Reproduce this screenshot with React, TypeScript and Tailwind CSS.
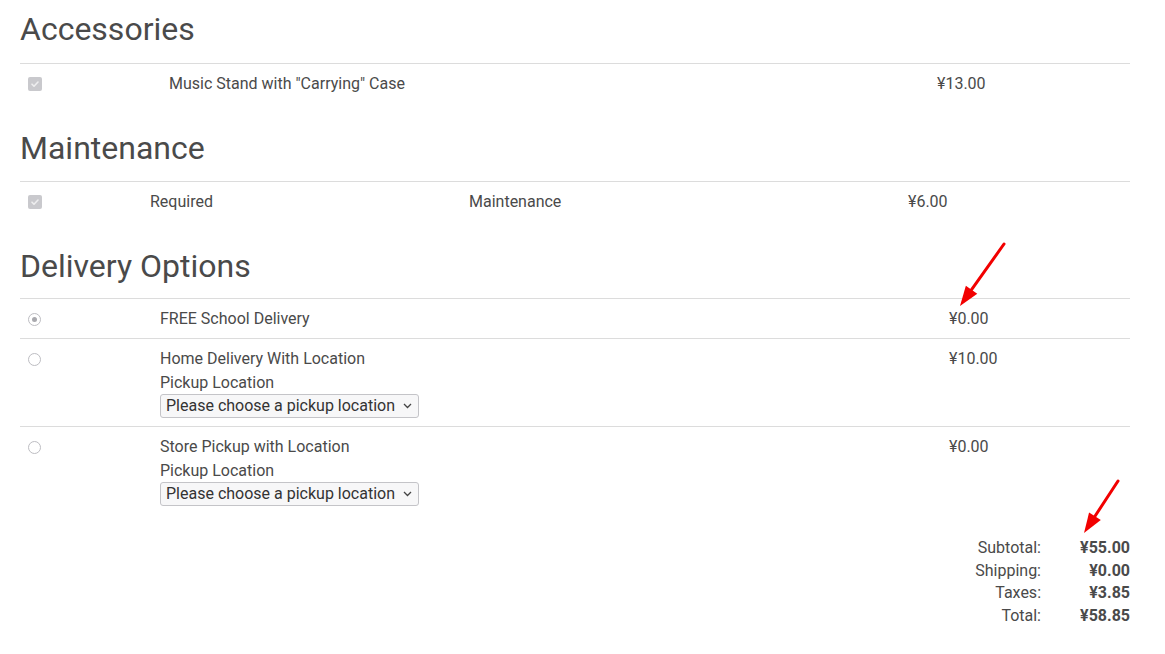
const font = { fontFamily: "Roboto, 'Noto Sans', sans-serif" };

function Check() {
  return (
    <span className="flex h-[14px] w-[14px] items-center justify-center rounded-[2px] bg-[#c9c9cd]">
      <svg width="10" height="10" viewBox="0 0 10 10" fill="none">
        <path d="M2 5.2l2 2 4-4.2" stroke="#eeeeef" strokeWidth="1.6" strokeLinecap="round" strokeLinejoin="round" />
      </svg>
    </span>
  );
}

function Radio({ checked }: { checked?: boolean }) {
  return (
    <span className="flex h-[13px] w-[13px] items-center justify-center rounded-full border border-[#bdbdc2] bg-white">
      {checked && <span className="h-[5px] w-[5px] rounded-full bg-[#a9a9ae]" />}
    </span>
  );
}

function PickupSelect() {
  return (
    <div className="flex h-[24px] w-[259px] items-center justify-between rounded-[3px] border border-[#c4c4c8] bg-[#f7f7f8] pl-[5px] pr-[6px] text-[#333]">
      <span>Please choose a pickup location</span>
      <svg width="9" height="6" viewBox="0 0 9 6" fill="none">
        <path d="M1 1l3.5 3.5L8 1" stroke="#444" strokeWidth="1.3" />
      </svg>
    </div>
  );
}

const deliveries = [
  { name: "FREE School Delivery", price: "¥0.00", checked: true, pickup: false },
  { name: "Home Delivery With Location", price: "¥10.00", checked: false, pickup: true },
  { name: "Store Pickup with Location", price: "¥0.00", checked: false, pickup: true },
];

const totals = [
  ["Subtotal:", "¥55.00"],
  ["Shipping:", "¥0.00"],
  ["Taxes:", "¥3.85"],
  ["Total:", "¥58.85"],
];

function Arrow({ x1, y1, x2, y2 }: { x1: number; y1: number; x2: number; y2: number }) {
  const ang = Math.atan2(y2 - y1, x2 - x1);
  const len = 20;
  const w = 7;
  const bx = x2 - len * Math.cos(ang);
  const by = y2 - len * Math.sin(ang);
  const px = -Math.sin(ang) * w;
  const py = Math.cos(ang) * w;
  return (
    <g>
      <line x1={x1} y1={y1} x2={bx} y2={by} stroke="#f20000" strokeWidth="3" strokeLinecap="round" />
      <polygon points={`${x2},${y2} ${bx + px},${by + py} ${bx - px},${by - py}`} fill="#f20000" />
    </g>
  );
}

export default function App() {
  return (
    <div className="relative h-[654px] w-[1165px] overflow-hidden bg-white text-[16px] leading-[24px] text-[#4a4a4a]" style={font}>
      <div className="ml-5 flex w-[1110px] flex-col">
        <h2 className="mb-[15px] pt-[10px] text-[32px] leading-[38px]">Accessories</h2>
        <div className="grid h-[40px] grid-cols-[149px_768px_1fr] items-center border-t border-[#dcdcdc]">
          <div className="pl-2"><Check /></div>
          <div>Music Stand with "Carrying" Case</div>
          <div>¥13.00</div>
        </div>

        <h2 className="mb-[14px] pt-[26px] text-[32px] leading-[38px]">Maintenance</h2>
        <div className="grid h-[40px] grid-cols-[130px_319px_439px_1fr] items-center border-t border-[#dcdcdc]">
          <div className="pl-2"><Check /></div>
          <div>Required</div>
          <div>Maintenance</div>
          <div>¥6.00</div>
        </div>

        <h2 className="mb-[13px] pt-[26px] text-[32px] leading-[38px]">Delivery Options</h2>
        <div>
          {deliveries.map((d, i) => (
            <div
              key={i}
              className={`grid grid-cols-[140px_789px_1fr] border-t border-[#dcdcdc] pt-2 ${d.pickup ? "pb-2" : "pb-[7px]"}`}
            >
              <div className="flex h-[24px] items-center pl-2"><Radio checked={d.checked} /></div>
              <div className="flex flex-col">
                <div className="leading-[24px]">{d.name}</div>
                {d.pickup && (
                  <>
                    <div className="leading-[23px]">Pickup Location</div>
                    <PickupSelect />
                  </>
                )}
              </div>
              <div className="leading-[24px]">{d.price}</div>
            </div>
          ))}
        </div>

        <div className="mt-[23px] flex flex-col items-end">
          {totals.map(([label, value]) => (
            <div key={label} className="grid grid-cols-[auto_89px] leading-[22.7px]">
              <div className="text-right">{label}</div>
              <div className="text-right font-bold">{value}</div>
            </div>
          ))}
        </div>
      </div>

      <svg className="pointer-events-none absolute left-0 top-0" width="1165" height="654">
        <Arrow x1={1004} y1={244} x2={960} y2={306} />
        <Arrow x1={1118} y1={481} x2={1084} y2={533} />
      </svg>
    </div>
  );
}
